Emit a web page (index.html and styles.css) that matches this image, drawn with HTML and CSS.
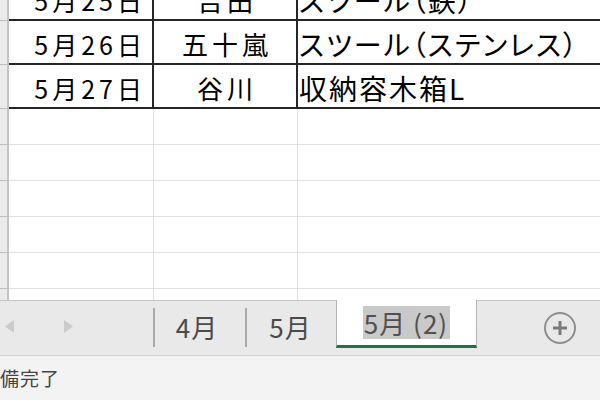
FILE: index.html
```html
<!DOCTYPE html>
<html lang="ja">
<head>
<meta charset="utf-8">
<title>Sheet</title>
<link rel="stylesheet" href="styles.css">
</head>
<body>
<div class="app">
  <div class="sheet">
    <div class="rows">
      <div class="row data">
        <div class="rh"></div>
        <div class="c ca"><span class="date">5月25日</span></div>
        <div class="c cb"><span class="name">吉田</span></div>
        <div class="c cc"><span class="item">スツール（鉄）</span></div>
      </div>
      <div class="row data">
        <div class="rh"></div>
        <div class="c ca"><span class="date">5月26日</span></div>
        <div class="c cb"><span class="name">五十嵐</span></div>
        <div class="c cc"><span class="item">スツール（ステンレス）</span></div>
      </div>
      <div class="row data">
        <div class="rh"></div>
        <div class="c ca"><span class="date">5月27日</span></div>
        <div class="c cb"><span class="name">谷川</span></div>
        <div class="c cc"><span class="item">収納容木箱L</span></div>
      </div>
      <div class="row empty"><div class="rh"></div><div class="c ca"></div><div class="c cb"></div><div class="c cc"></div></div>
      <div class="row empty"><div class="rh"></div><div class="c ca"></div><div class="c cb"></div><div class="c cc"></div></div>
      <div class="row empty"><div class="rh"></div><div class="c ca"></div><div class="c cb"></div><div class="c cc"></div></div>
      <div class="row empty"><div class="rh"></div><div class="c ca"></div><div class="c cb"></div><div class="c cc"></div></div>
      <div class="row empty"><div class="rh"></div><div class="c ca"></div><div class="c cb"></div><div class="c cc"></div></div>
      <div class="row empty"><div class="rh"></div><div class="c ca"></div><div class="c cb"></div><div class="c cc"></div></div>
    </div>
  </div>
  <div class="tabbar">
    <div class="nav">
      <svg width="80" height="40" viewBox="0 0 80 40">
        <polygon points="14,20 5,26.5 14,33" fill="#cbcbcb"/>
        <polygon points="64,20 73,26.5 64,33" fill="#cbcbcb"/>
      </svg>
    </div>
    <div class="tab">4月</div>
    <div class="tab">5月</div>
    <div class="tab active"><span class="sel">5月 (2)</span></div>
    <div class="add">
      <svg width="34" height="34" viewBox="0 0 34 34">
        <circle cx="17" cy="17" r="15" fill="none" stroke="#8e8e8e" stroke-width="2"/>
        <rect x="10" y="15.5" width="14" height="3" fill="#7c7c7c"/>
        <rect x="15.5" y="10" width="3" height="14" fill="#7c7c7c"/>
      </svg>
    </div>
  </div>
  <div class="status"><span class="status-text">準備完了</span></div>
</div>
</body>
</html>
```
FILE: styles.css
```css
html, body {
  margin: 0;
  padding: 0;
  background: #ffffff;
}
.app {
  width: 600px;
  height: 400px;
  overflow: hidden;
  display: flex;
  flex-direction: column;
  font-family: "Noto Sans CJK JP", "Noto Sans", sans-serif;
}
.sheet {
  height: 300px;
  flex: 0 0 300px;
  overflow: hidden;
  background: #ffffff;
}
.rows {
  margin-top: -23px;
}
.row {
  display: grid;
  grid-template-columns: 9px 145px 144px 1fr;
  box-sizing: border-box;
}
.row.data { height: 44px; }
.row.empty { height: 36px; }
.rh {
  box-sizing: border-box;
  background: #ebebeb;
  border-right: 2px solid #c4c4c4;
  border-bottom: 1px solid #bdbdbd;
}
.c {
  box-sizing: border-box;
  display: flex;
  align-items: flex-end;
  overflow: hidden;
  white-space: nowrap;
  color: #000;
}
.row.data .c {
  border-bottom: 2px solid #262626;
  padding-bottom: 3px;
}
.row.data .ca, .row.data .cb {
  border-right: 2px solid #262626;
}
.row.empty .c { border-bottom: 1px solid #e1e1e1; }
.row.empty .ca, .row.empty .cb { border-right: 1px solid #e1e1e1; }
.ca { justify-content: flex-end; padding-right: 6px; }
.cb { justify-content: center; }
.cc { justify-content: flex-start; padding-left: 1px; }
.date {
  font-size: 25px;
  line-height: 32px;
  letter-spacing: 4px;
}
.name {
  font-size: 26px;
  line-height: 32px;
  letter-spacing: 4px;
  margin-right: -4px;
}
.item {
  font-size: 28px;
  line-height: 32px;
  font-feature-settings: "palt";
  letter-spacing: 2px;
}
.tabbar {
  flex: 0 0 56px;
  height: 56px;
  box-sizing: border-box;
  background: #e9e9e9;
  border-top: 1px solid #c6c6c6;
  border-bottom: 1px solid #d4d4d4;
  display: flex;
  align-items: flex-start;
}
.nav {
  width: 153px;
  height: 40px;
  margin-top: -1px;
}
.nav svg { display: block; }
.tab {
  box-sizing: border-box;
  height: 39px;
  margin-top: 7px;
  border-left: 2px solid #a9a9a9;
  width: 92px;
  display: flex;
  align-items: center;
  justify-content: center;
  font-size: 26px;
  letter-spacing: 1px;
  color: #4a4a4a;
  padding-bottom: 2px;
  padding-right: 6px;
}
.tab + .tab { width: 91px; padding-right: 2px; }
.tab.active {
  margin-top: -1px;
  height: 48px;
  width: 141px;
  background: #ffffff;
  border-left: 1px solid #b3b3b3;
  border-right: 1px solid #b3b3b3;
  border-bottom: 3px solid #217346;
  padding: 4px 0 4px 0;
}
.sel {
  background: #c9c9c9;
  color: #505050;
  padding: 0 2px 0 1px;
  line-height: 33px;
}
.add {
  margin-left: 66px;
  margin-top: 10px;
}
.add svg { display: block; }
.status {
  flex: 1 1 auto;
  background: #f3f3f3;
  display: flex;
  align-items: center;
  overflow: hidden;
}
.status-text {
  margin-left: -20px;
  font-size: 19px;
  letter-spacing: 1px;
  color: #444;
  white-space: nowrap;
  padding-bottom: 2px;
}
```
